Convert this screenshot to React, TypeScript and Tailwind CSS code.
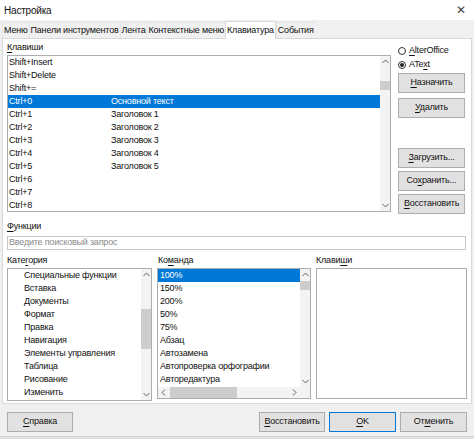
import React from 'react';

const U: React.FC<{ pre?: string; u: string; post?: string }> = ({ pre, u, post }) => (
  <span>
    {pre}
    <span className="underline underline-offset-[2px] decoration-[0.5px]">{u}</span>
    {post}
  </span>
);

const Up = () => (
  <svg width="7" height="5" viewBox="0 0 7 5" className="block">
    <polyline points="0.5,4 3.5,1 6.5,4" fill="none" stroke="#606060" strokeWidth="1" />
  </svg>
);
const Down = () => (
  <svg width="7" height="5" viewBox="0 0 7 5" className="block">
    <polyline points="0.5,1 3.5,4 6.5,1" fill="none" stroke="#606060" strokeWidth="1" />
  </svg>
);
const Left = () => (
  <svg width="5" height="7" viewBox="0 0 5 7" className="block">
    <polyline points="4,0.5 1,3.5 4,6.5" fill="none" stroke="#606060" strokeWidth="1" />
  </svg>
);
const Right = () => (
  <svg width="5" height="7" viewBox="0 0 5 7" className="block">
    <polyline points="1,0.5 4,3.5 1,6.5" fill="none" stroke="#606060" strokeWidth="1" />
  </svg>
);

const Btn: React.FC<{ w: string; children: React.ReactNode; primary?: boolean }> = ({ w, children, primary }) => (
  <div
    className={`${w} h-[20px] flex items-center justify-center bg-[#e1e1e1] border ${primary ? 'border-[#0078d7]' : 'border-[#adadad]'}`}
  >
    {children}
  </div>
);

// vertical scrollbar for list boxes
const VScroll: React.FC<{ thumbTop: number; thumbH: number }> = ({ thumbTop, thumbH }) => (
  <div className="w-[10px] h-full bg-[#f3f3f3] flex flex-col items-center justify-between py-[3px]">
    <Up />
    <div className="flex-1 w-full relative">
      <div className="absolute left-0 right-0 bg-[#cdcdcd]" style={{ top: thumbTop, height: thumbH }} />
    </div>
    <Down />
  </div>
);

const keys: [string, string][] = [
  ['Shift+Insert', ''],
  ['Shift+Delete', ''],
  ['Shift+=', ''],
  ['Ctrl+0', 'Основной текст'],
  ['Ctrl+1', 'Заголовок 1'],
  ['Ctrl+2', 'Заголовок 2'],
  ['Ctrl+3', 'Заголовок 3'],
  ['Ctrl+4', 'Заголовок 4'],
  ['Ctrl+5', 'Заголовок 5'],
  ['Ctrl+6', ''],
  ['Ctrl+7', ''],
  ['Ctrl+8', ''],
];

const categories = [
  'Специальные функции',
  'Вставка',
  'Документы',
  'Формат',
  'Правка',
  'Навигация',
  'Элементы управления',
  'Таблица',
  'Рисование',
  'Изменить',
];

const commands = ['100%', '150%', '200%', '50%', '75%', 'Абзац', 'Автозамена', 'Автопроверка орфографии', 'Авторедактура'];

const tabs = ['Меню', 'Панели инструментов', 'Лента', 'Контекстные меню', 'Клавиатура', 'События'];

export default function App() {
  return (
    <div
      className="w-[474px] h-[439px] bg-[#f0f0f0] flex flex-col text-[9px] tracking-[-0.2px] text-[#111] overflow-hidden"
      style={{ fontFamily: '"Liberation Sans", Arial, sans-serif' }}
    >
      {/* title bar */}
      <div className="h-[20px] bg-white flex items-center justify-between pl-[4px] pr-[8px]">
        <span className="text-[10px]">Настройка</span>
        <span className="text-[12px] text-[#444] leading-none">✕</span>
      </div>

      {/* tabs */}
      <div className="h-[18px] flex items-end pl-[2px]">
        {tabs.map(t => (
          <div
            key={t}
            className={
              t === 'Клавиатура'
                ? 'h-[18px] px-[1px] bg-white border border-b-0 border-[#d9d9d9] flex items-center -mb-px z-10 relative'
                : 'h-[16px] px-[1px] bg-[#f0f0f0] border-l border-t border-[#e3e3e3] flex items-center'
            }
          >
            {t}
          </div>
        ))}
      </div>

      {/* tab panel */}
      <div className="mx-[2px] h-[366px] bg-white border border-[#d9d9d9] flex flex-col pl-[4px] pr-[4px]">
        <div className="flex">
          <div className="w-[384px] flex flex-col">
            <div className="h-[16px] flex items-end pb-[1px]">
              <U u="К" post="лавиши" />
            </div>
            <div className="h-[157px] border border-[#adadad] flex overflow-hidden">
              <div className="flex-1 flex flex-col">
                {keys.map(([k, v]) => (
                  <div
                    key={k}
                    className={`h-[13px] shrink-0 flex items-center pl-[1px] ${k === 'Ctrl+0' ? 'bg-[#0078d7] text-white' : ''}`}
                  >
                    <span className="w-[102px]">{k}</span>
                    <span>{v}</span>
                  </div>
                ))}
              </div>
              <VScroll thumbTop={17} thumbH={9} />
            </div>
          </div>
          <div className="flex-1 flex flex-col pl-[7px] pt-[4px]">
            <div className="h-[15px] flex items-center gap-[3px]">
              <span className="w-[8px] h-[8px] rounded-full border border-[#333]" />
              <U u="A" post="lterOffice" />
            </div>
            <div className="h-[14px] flex items-center gap-[3px]">
              <span className="w-[8px] h-[8px] rounded-full border border-[#333] flex items-center justify-center">
                <span className="w-[4px] h-[4px] rounded-full bg-[#222]" />
              </span>
              <U pre="ATe" u="x" post="t" />
            </div>
            <div className="flex flex-col gap-[5px] mt-[1px]">
              <Btn w="w-[67px]"><U u="Н" post="азначить" /></Btn>
              <Btn w="w-[67px]"><U u="У" post="далить" /></Btn>
            </div>
            <div className="flex flex-col gap-[3px] mt-[30px]">
              <Btn w="w-[67px]"><U u="З" post="агрузить..." /></Btn>
              <Btn w="w-[67px]"><U pre="Со" u="х" post="ранить..." /></Btn>
              <Btn w="w-[67px]"><U u="В" post="осстановить" /></Btn>
            </div>
          </div>
        </div>

        {/* functions */}
        <div className="h-[22px] flex items-end pb-[3px]">
          <U u="Ф" post="ункции" />
        </div>
        <div className="w-[459px] h-[14px] border border-[#c8c8c8] flex items-center pl-[1px] text-[#8a8a8a]">
          Введите поисковый запрос
        </div>

        <div className="flex gap-[5px] mt-[3px]">
          <div className="w-[145px] flex flex-col">
            <div className="h-[15px] flex items-center">
              <U pre="Кате" u="г" post="ория" />
            </div>
            <div className="h-[133px] border border-[#adadad] flex overflow-hidden">
              <div className="flex-1 flex flex-col">
                {categories.map(c => (
                  <div key={c} className="h-[13px] shrink-0 flex items-center pl-[16px]">{c}</div>
                ))}
              </div>
              <VScroll thumbTop={32} thumbH={40} />
            </div>
          </div>
          <div className="w-[154px] flex flex-col">
            <div className="h-[15px] flex items-center pl-[1px]">
              <U pre="Ко" u="м" post="анда" />
            </div>
            <div className="h-[131px] border border-[#adadad] flex flex-col overflow-hidden">
              <div className="flex-1 flex min-h-0">
                <div className="flex-1 flex flex-col overflow-hidden">
                  {commands.map(c => (
                    <div
                      key={c}
                      className={`h-[13px] shrink-0 flex items-center pl-[2px] whitespace-nowrap ${c === '100%' ? 'bg-[#0078d7] text-white' : ''}`}
                    >
                      {c}
                    </div>
                  ))}
                </div>
                <VScroll thumbTop={4} thumbH={9} />
              </div>
              <div className="h-[11px] flex">
                <div className="flex-1 bg-[#f3f3f3] flex items-center px-[3px] gap-[4px]">
                  <Left />
                  <div className="w-[67px] h-full bg-[#cdcdcd]" />
                  <div className="flex-1" />
                  <Right />
                </div>
                <div className="w-[10px] bg-[#f3f3f3]" />
              </div>
            </div>
          </div>
          <div className="w-[151px] flex flex-col">
            <div className="h-[15px] flex items-center">
              <U pre="Клави" u="ш" post="и" />
            </div>
            <div className="h-[131px] border border-[#adadad]" />
          </div>
        </div>
      </div>

      {/* bottom buttons */}
      <div className="flex-1 flex items-start pt-[8px] px-[7px]">
        <Btn w="w-[66px]"><U u="С" post="правка" /></Btn>
        <div className="flex-1" />
        <div className="flex gap-[4px]">
          <Btn w="w-[66px]"><U u="В" post="осстановить" /></Btn>
          <Btn w="w-[67px]" primary><U u="O" post="K" /></Btn>
          <Btn w="w-[67px]"><U pre="От" u="м" post="енить" /></Btn>
        </div>
      </div>
      <div className="h-[3px] bg-[#e0e0e0] border-t border-[#d4d4d4]" />
    </div>
  );
}
